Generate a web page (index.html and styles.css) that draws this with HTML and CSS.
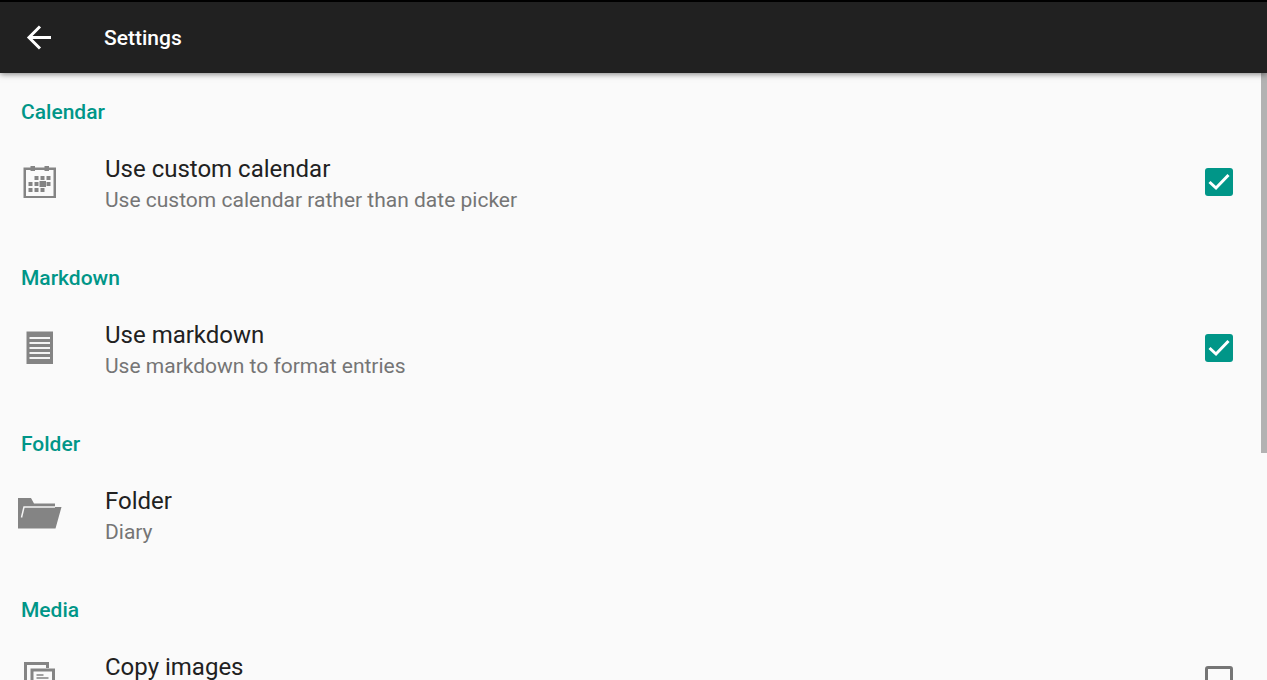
FILE: index.html
```html
<!DOCTYPE html>
<html lang="en">
<head>
<meta charset="utf-8">
<meta name="viewport" content="width=device-width, initial-scale=1">
<title>Settings</title>
<link rel="stylesheet" href="styles.css">
</head>
<body>
<header class="app-bar">
  <button class="back" type="button" aria-label="Back">
    <svg width="36" height="36" viewBox="0 0 36 36" fill="none" stroke="#fff" stroke-width="3"><path d="M31 17.500H9M20 6.500l-11 11 11 11"/></svg>
  </button>
  <h1 class="app-title">Settings</h1>
</header>
<div class="viewport">
  <main class="settings">
    <section class="group">
      <h2 class="group-title">Calendar</h2>
      <label class="row">
        <svg class="icon" width="44" height="44" viewBox="0 0 44 44" fill="#848484"><path fill-rule="evenodd" d="M5.500 7.500h32.500v30.500H5.500zM8 10v26h27.500V10z"/><path d="M12.500 6h4.500v5h-4.500zM26.500 6h4.500v5h-4.500zM16.500 16h4v4h-4zM22.500 16h4v4h-4zM28.500 16h4v4h-4zM10.500 22h4v4h-4zM16.500 22h4v4h-4zM21.500 21h6.500v6h-6.500zM28.500 22h4v4h-4zM10.500 28h4v4h-4zM16.500 28h4v4h-4zM22.500 28h4v4h-4z"/></svg>
        <span class="text"><span class="name">Use custom calendar</span><span class="summary">Use custom calendar rather than date picker</span></span>
        <input class="check" type="checkbox" checked>
      </label>
    </section>
    <section class="group">
      <h2 class="group-title">Markdown</h2>
      <label class="row">
        <svg class="icon" width="44" height="44" viewBox="0 0 44 44"><path fill="#848484" d="M8.500 5.500H35V38H8.500z"/><path stroke="#f4f4f4" stroke-width="1.800" d="M11.500 12h20.500M11.500 17h20.500M11.500 22h20.500M11.500 27h20.500M11.500 32h20.500"/></svg>
        <span class="text"><span class="name">Use markdown</span><span class="summary">Use markdown to format entries</span></span>
        <input class="check" type="checkbox" checked>
      </label>
    </section>
    <section class="group">
      <h2 class="group-title">Folder</h2>
      <button class="row" type="button">
        <svg class="icon" width="44" height="44" viewBox="0 0 44 44"><path fill="#848484" d="M0 6h13l3 5.500h21V15h6.500L37.500 36.500H0z"/><path fill="none" stroke="#f4f4f4" stroke-width="1.500" d="M3.500 25.500L6 15h31"/></svg>
        <span class="text"><span class="name">Folder</span><span class="summary">Diary</span></span>
      </button>
    </section>
    <section class="group">
      <h2 class="group-title">Media</h2>
      <label class="row">
        <svg class="icon" width="44" height="44" viewBox="0 0 44 44" fill="none" stroke="#848484"><path stroke-width="3" d="M10 31H7.500V5.500h22V10M14 12h21.500v26H14z"/><path stroke-width="1.500" d="M18.500 17h7M18.500 20h12M18.500 24h12"/></svg>
        <span class="text"><span class="name">Copy images</span></span>
        <input class="check" type="checkbox">
      </label>
    </section>
  </main>
  <div class="scroll-thumb"></div>
</div>
</body>
</html>
```
FILE: styles.css
```css
* {
  box-sizing: border-box;
}

body {
  margin: 0;
  height: 100vh;
  display: flex;
  flex-direction: column;
  overflow: hidden;
  background: #fafafa;
  color: #212121;
  font-family: Roboto, "Noto Sans", sans-serif;
}

.app-bar {
  flex: none;
  display: flex;
  align-items: center;
  gap: 48px;
  padding: 18px 20px 17px;
  border-top: 2px solid #000;
  background: #212121;
  color: #fff;
  box-shadow: 0 1px 6px rgba(0, 0, 0, 0.5);
  z-index: 1;
}

.back {
  display: flex;
  padding: 0;
  border: 0;
  background: none;
}

.app-title {
  margin: 0;
  font-size: 21px;
  line-height: 28px;
  font-weight: 500;
}

.viewport {
  position: relative;
  flex: 1;
  min-height: 0;
}

.settings {
  height: 100%;
  overflow: hidden;
  padding: 23px 34px 0 18px;
}

.group {
  margin-bottom: 26px;
}

.group-title {
  margin: 0 0 0 3px;
  font-size: 21px;
  line-height: 32px;
  font-weight: 500;
  color: #009688;
}

.row {
  display: flex;
  align-items: center;
  width: 100%;
  height: 108px;
  padding: 0;
  border: 0;
  background: none;
  font: inherit;
  color: inherit;
  text-align: left;
}

.icon {
  flex: none;
}

.text {
  flex: 1;
  align-self: flex-start;
  display: flex;
  flex-direction: column;
  padding: 25px 0 0 43px;
}

.name {
  font-size: 24px;
  line-height: 32px;
}

.summary {
  font-size: 21px;
  line-height: 30px;
  color: #757575;
}

.check {
  appearance: none;
  flex: none;
  width: 28px;
  height: 28px;
  margin: 0;
  border: 3px solid #757575;
  border-radius: 3px;
}

.check:checked {
  border: 0;
  background: #009688 url("data:image/svg+xml,%3Csvg xmlns='http://www.w3.org/2000/svg' viewBox='0 0 28 28'%3E%3Cpath d='M4.500 14l6.500 6L23.500 7' fill='none' stroke='white' stroke-width='3'/%3E%3C/svg%3E") center / 28px 28px no-repeat;
}

.scroll-thumb {
  position: absolute;
  top: 0;
  right: 0;
  width: 6px;
  height: 62.6%;
  background: #b2b2b2;
}
```
